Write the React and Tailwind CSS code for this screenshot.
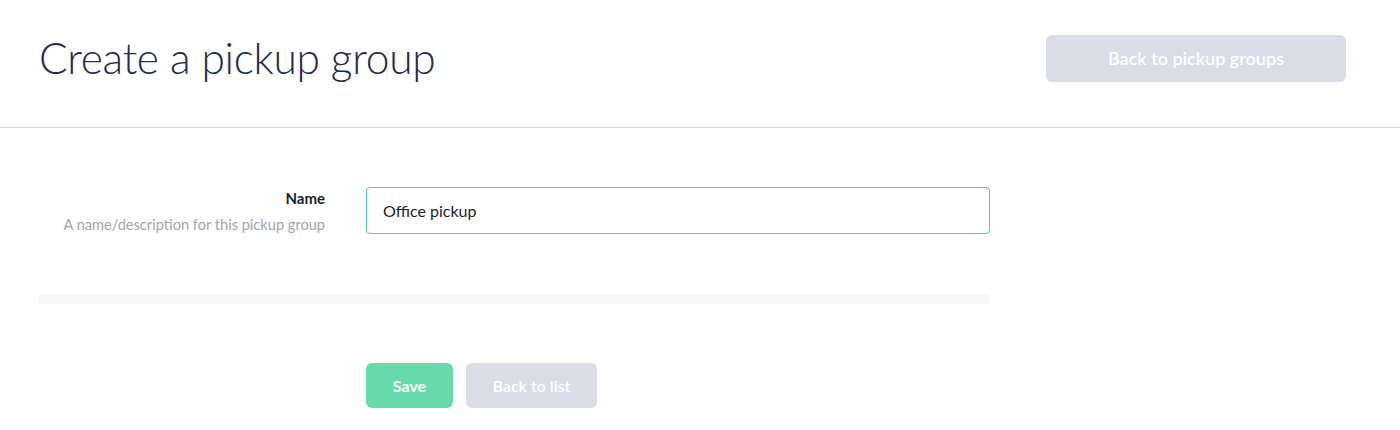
export default function App() {
  return (
    <div
      className="w-[1400px] h-[430px] bg-white overflow-hidden"
      style={{ fontFamily: '"Lato", "Open Sans", sans-serif' }}
    >
      {/* page header */}
      <div className="h-[128px] border-b border-[#d7d9e6] flex items-center justify-between pl-[39px] pr-[54px]">
        <h1 className="text-[42.5px] font-light text-[#262b4e] tracking-[-0.3px] leading-none mt-[-10px]">
          Create a pickup group
        </h1>
        <button className="w-[300px] h-[47px] rounded-[6px] bg-[#dadce8] text-white text-[18px] font-semibold mt-[-10px]">
          Back to pickup groups
        </button>
      </div>

      {/* form */}
      <div className="pt-[59px] pl-[39px]">
        <div className="flex">
          <div className="w-[286px] text-right pt-[1px]">
            <div className="text-[15px] font-bold text-[#1b1d28] leading-5">Name</div>
            <div className="text-[14.6px] text-[#a3a4ad] mt-[7px] leading-5">
              A name/description for this pickup group
            </div>
          </div>
          <div className="ml-[41px]">
            <input
              defaultValue="Office pickup"
              className="w-[624px] h-[47px] rounded-[4px] border-[1.5px] border-[#45c6e0] px-[16px] text-[16px] text-[#1b1d28] outline-none"
            />
          </div>
        </div>

        <div className="mt-[59px] w-[951px] h-[10px] bg-[#f8f8fb]" />

        <div className="flex gap-[13px] ml-[327px] mt-[59px]">
          <button className="w-[87px] h-[45px] rounded-[6px] bg-[#67dcab] text-white text-[16px] font-bold">
            Save
          </button>
          <button className="w-[131px] h-[45px] rounded-[6px] bg-[#dadce8] text-white text-[16px] font-semibold">
            Back to list
          </button>
        </div>
      </div>
    </div>
  );
}
